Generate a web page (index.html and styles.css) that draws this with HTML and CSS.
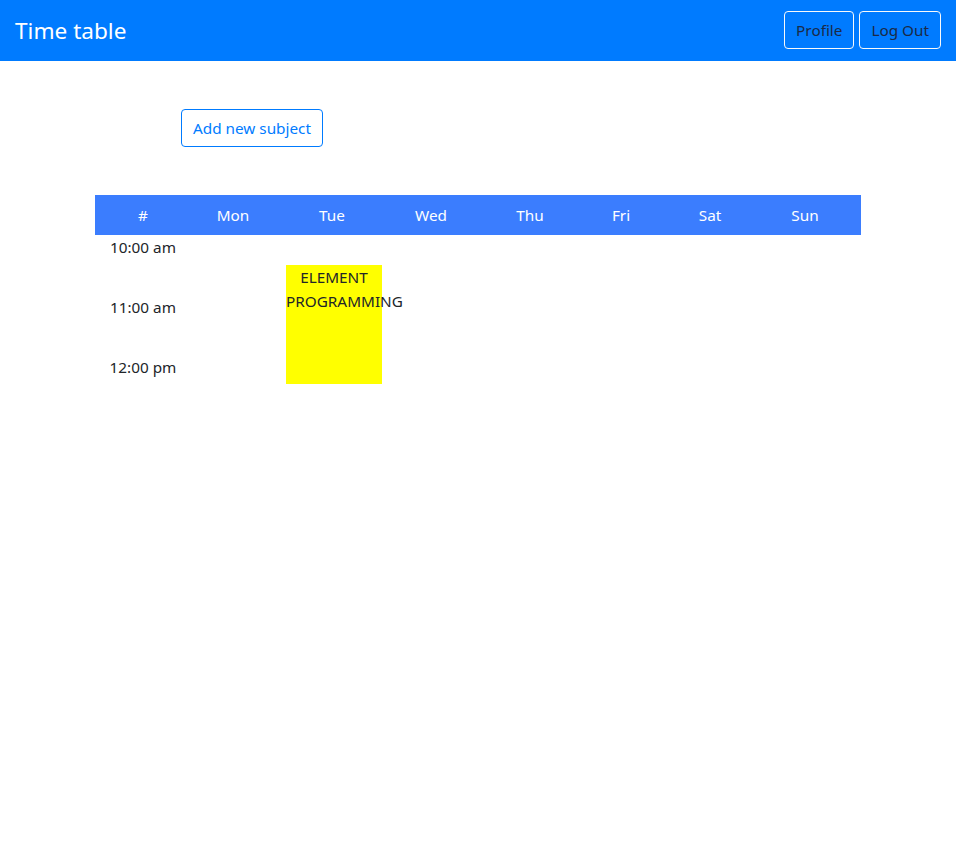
FILE: index.html
```html
<!DOCTYPE html>
<html>
<head>
<meta charset="utf-8">
<link rel="stylesheet" href="styles.css">
</head>
<body>
<nav class="navbar">
  <span class="brand">Time table</span>
  <div class="nav-actions">
    <button class="btn btn-light">Profile</button>
    <button class="btn btn-light">Log Out</button>
  </div>
</nav>
<main class="content">
  <div class="toolbar">
    <button class="btn btn-primary-outline">Add new subject</button>
  </div>
  <div class="timetable">
    <div class="head">
      <div class="hc">#</div>
      <div class="hc">Mon</div>
      <div class="hc">Tue</div>
      <div class="hc">Wed</div>
      <div class="hc">Thu</div>
      <div class="hc">Fri</div>
      <div class="hc">Sat</div>
      <div class="hc sun">Sun</div>
    </div>
    <div class="body">
      <div class="row"><div class="time">10:00 am</div></div>
      <div class="row"><div class="time">11:00 am</div></div>
      <div class="row"><div class="time">12:00 pm</div></div>
      <div class="event">ELEMENT PROGRAMMING</div>
    </div>
  </div>
</main>
</body>
</html>
```
FILE: styles.css
```css
* { box-sizing: border-box; }
body {
  margin: 0;
  font-family: "Noto Sans", "Open Sans", sans-serif;
  font-size: 15.3px;
  line-height: 24px;
  color: #212529;
  background: #fff;
}
.navbar {
  height: 61px;
  background: #007bff;
  display: flex;
  align-items: center;
  justify-content: space-between;
  padding: 0 15px;
}
.brand {
  color: #fff;
  font-size: 22.6px;
  line-height: 30px;
}
.nav-actions {
  display: flex;
  gap: 5px;
  margin-top: -1px;
}
.btn {
  font-family: inherit;
  font-size: 15.3px;
  line-height: 24px;
  height: 38px;
  padding: 6px 11px;
  border-radius: 4px;
  background: transparent;
  cursor: pointer;
}
.btn-light {
  border: 1px solid #f8f9fa;
  color: #1b2a47;
}
.btn-primary-outline {
  border: 1px solid #007bff;
  color: #007bff;
}
.content {
  padding: 48px 95px 0 95px;
}
.toolbar {
  padding-left: 86px;
  height: 86px;
}
.timetable {
  width: 766px;
}
.head {
  display: grid;
  grid-template-columns: 96px 84px 114px 84px 114px 68px 110px 96px;
  height: 40px;
  background: #3b7dfe;
  color: #fff;
}
.hc {
  display: flex;
  align-items: center;
  justify-content: center;
}
.hc.sun {
  padding-right: 16px;
}
.body {
  position: relative;
}
.row {
  height: 60px;
}
.time {
  width: 96px;
  text-align: center;
}
.event {
  position: absolute;
  left: 191px;
  top: 30px;
  width: 96px;
  height: 119px;
  background: #ffff00;
  text-align: center;
}
```
